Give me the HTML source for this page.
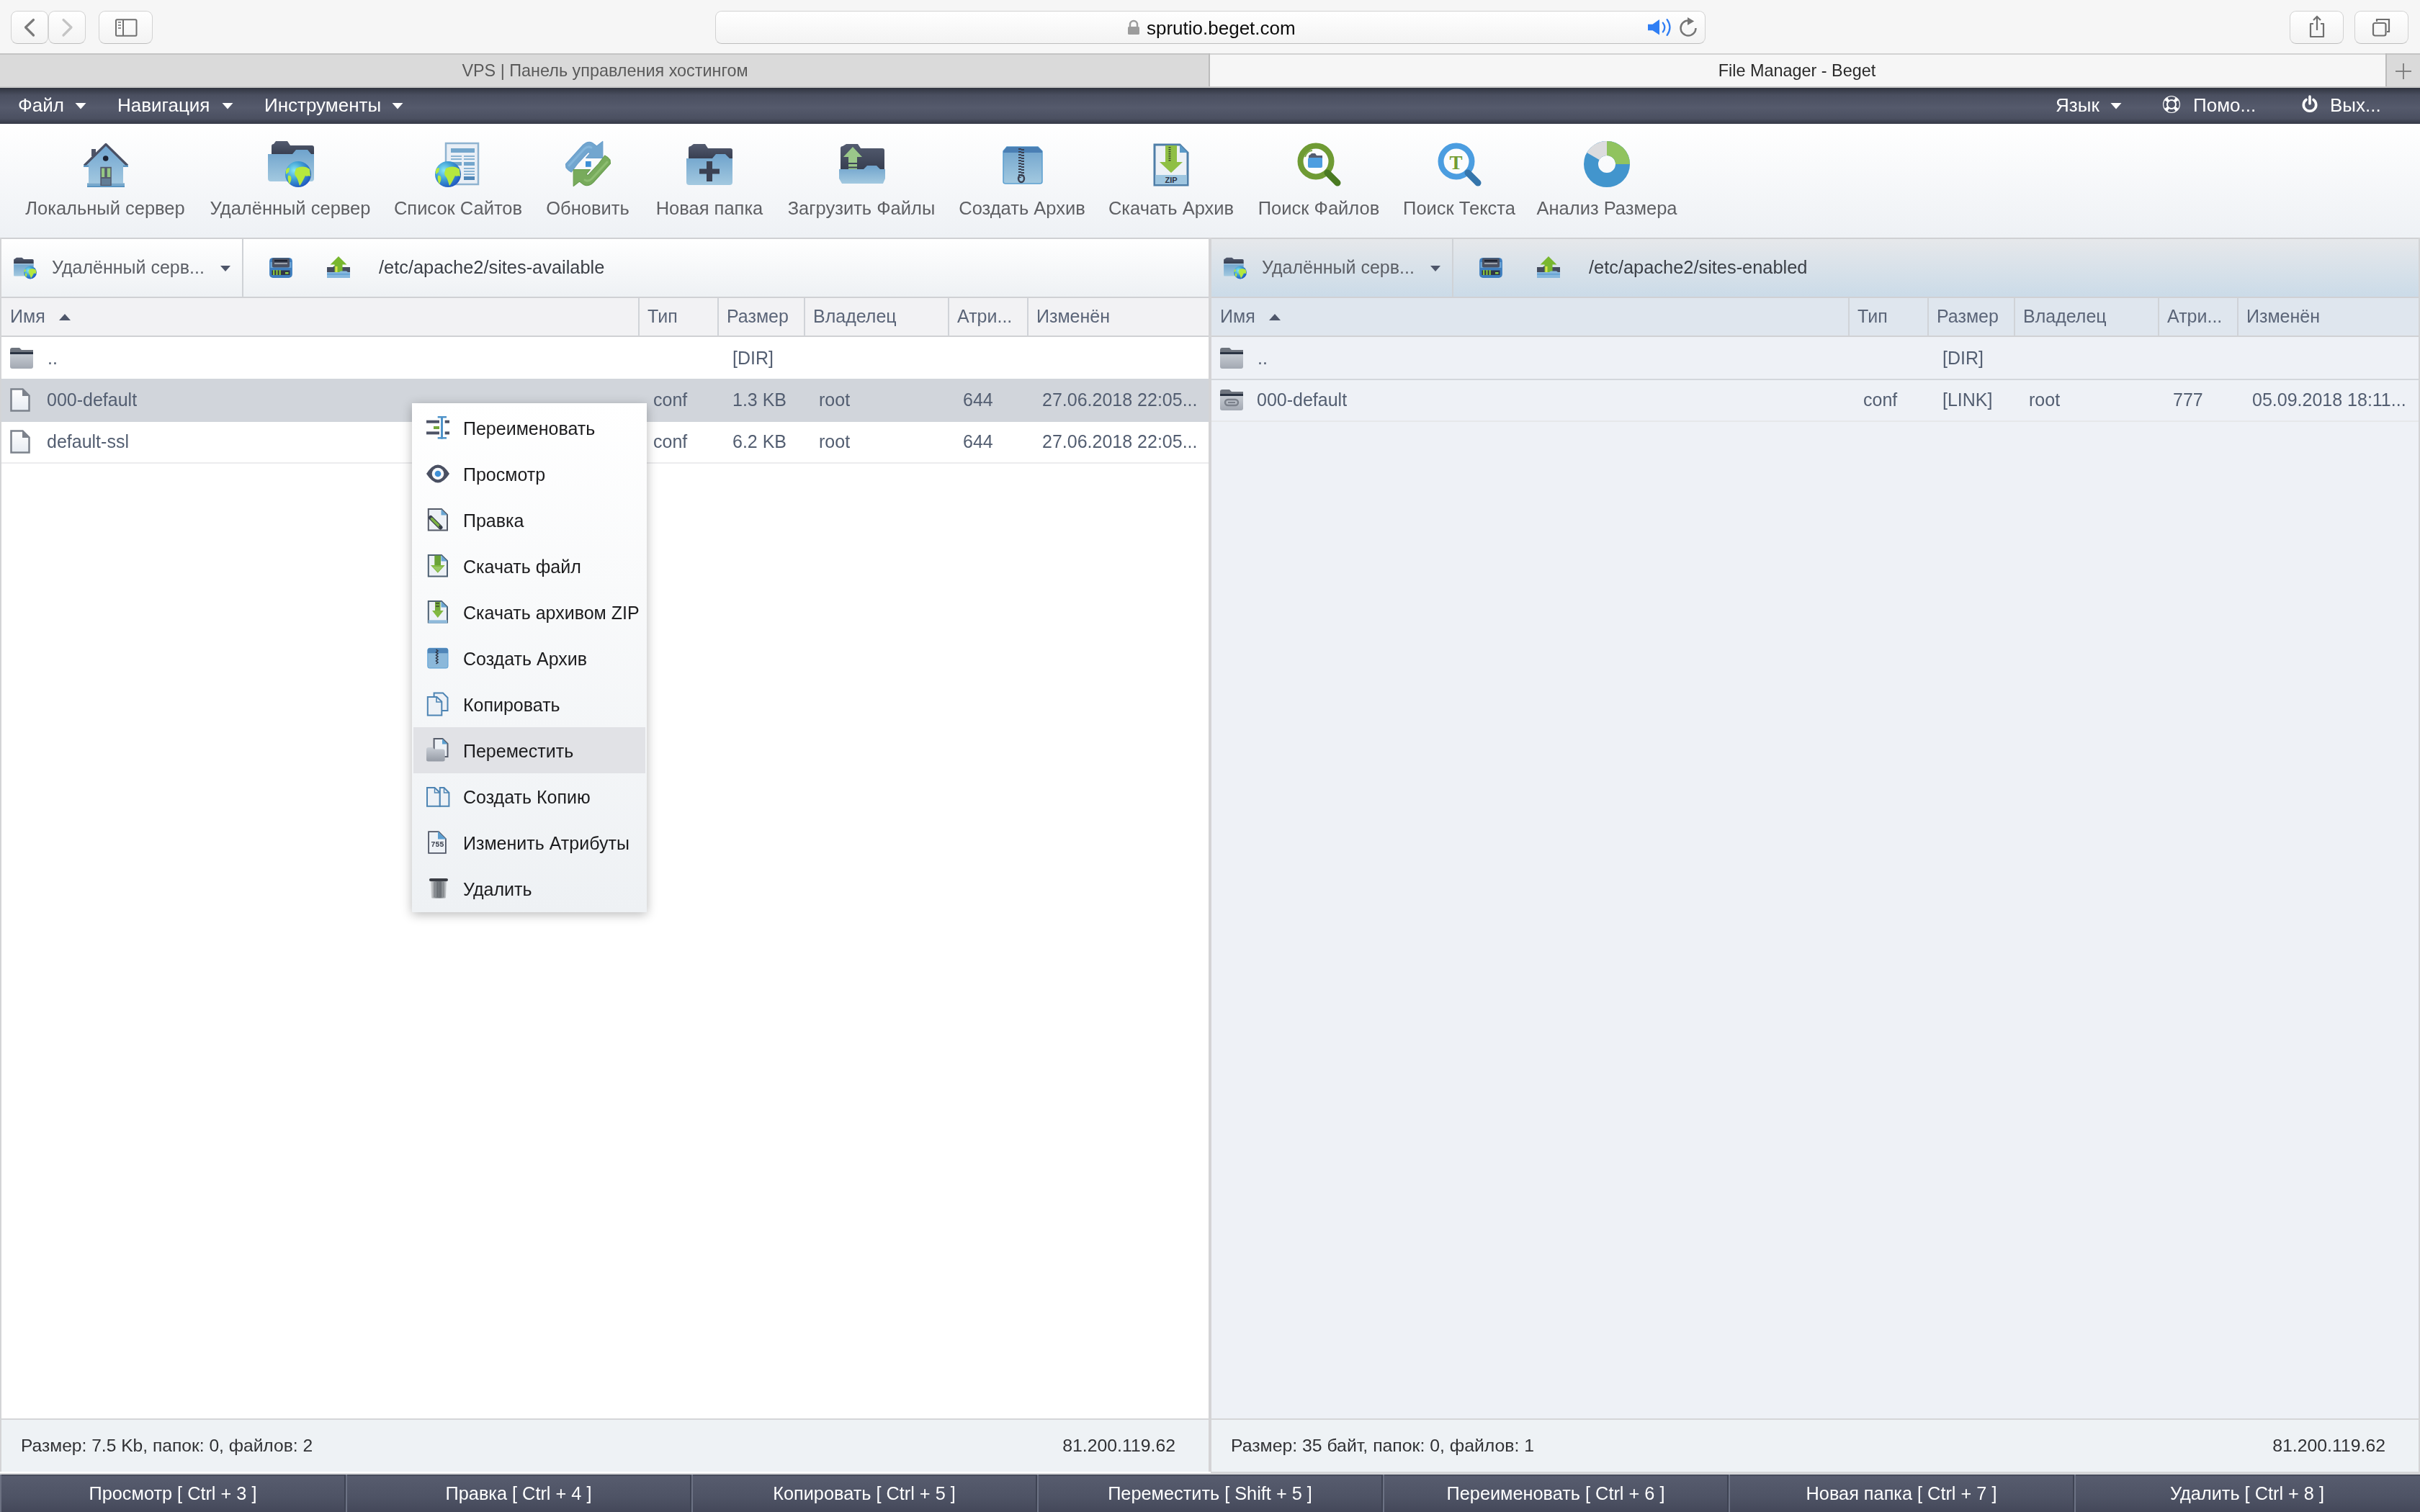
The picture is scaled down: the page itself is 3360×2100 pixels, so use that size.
<!DOCTYPE html>
<html><head><meta charset="utf-8"><title>File Manager - Beget</title>
<style>
html,body{margin:0;padding:0;width:3360px;height:2100px;overflow:hidden;background:#fff}
body{position:relative;font-family:"Liberation Sans",sans-serif}
.r{position:absolute;display:block}
.t{position:absolute;line-height:1;white-space:nowrap;will-change:transform}
svg.r{overflow:visible}
</style></head><body>
<div class="r" style="left:0px;top:0px;width:3360px;height:74px;background:#f6f6f6"></div>
<div class="r" style="left:0px;top:74px;width:3360px;height:2px;background:#c4c4c4"></div>
<div class="r" style="left:15px;top:15px;width:52px;height:46px;border:1px solid #d2d2d2;border-bottom-color:#bdbdbd;border-radius:9px;background:linear-gradient(#ffffff,#f3f3f3);box-sizing:border-box"></div>
<div class="r" style="left:67px;top:15px;width:52px;height:46px;border:1px solid #d2d2d2;border-bottom-color:#bdbdbd;border-radius:9px;background:linear-gradient(#ffffff,#f3f3f3);box-sizing:border-box"></div>
<div class="r" style="left:137px;top:15px;width:75px;height:46px;border:1px solid #d2d2d2;border-bottom-color:#bdbdbd;border-radius:9px;background:linear-gradient(#ffffff,#f3f3f3);box-sizing:border-box"></div>
<div class="r" style="left:993px;top:15px;width:1375px;height:46px;border:1px solid #d2d2d2;border-bottom-color:#bdbdbd;border-radius:9px;background:linear-gradient(#ffffff,#f3f3f3);box-sizing:border-box"></div>
<div class="r" style="left:3179px;top:15px;width:75px;height:46px;border:1px solid #d2d2d2;border-bottom-color:#bdbdbd;border-radius:9px;background:linear-gradient(#ffffff,#f3f3f3);box-sizing:border-box"></div>
<div class="r" style="left:3269px;top:15px;width:75px;height:46px;border:1px solid #d2d2d2;border-bottom-color:#bdbdbd;border-radius:9px;background:linear-gradient(#ffffff,#f3f3f3);box-sizing:border-box"></div>
<svg class="r" style="left:30px;top:24px" width="24" height="28"><path d="M16.5 3.5 L5.5 14 L16.5 25" fill="none" stroke="#7a7a7a" stroke-width="3.2" stroke-linecap="round" stroke-linejoin="round"/></svg>
<svg class="r" style="left:80px;top:24px" width="24" height="28"><path d="M8 3.5 L19 14 L8 25" fill="none" stroke="#c4c4c4" stroke-width="3.2" stroke-linecap="round" stroke-linejoin="round"/></svg>
<svg class="r" style="left:158px;top:24px" width="34" height="28"><rect x="3" y="3.3" width="28.5" height="22.5" rx="1.5" fill="none" stroke="#707070" stroke-width="2"/><line x1="13" y1="3" x2="13" y2="26" stroke="#707070" stroke-width="2"/><g stroke="#7a7a7a" stroke-width="1.7"><line x1="6" y1="7" x2="10" y2="7"/><line x1="6" y1="11" x2="10" y2="11"/><line x1="6" y1="15" x2="10" y2="15"/></g></svg>
<svg class="r" style="left:1565px;top:27px" width="18" height="22"><path d="M4 10 V7 a5 5 0 0 1 10 0 V10" fill="none" stroke="#9c9c9c" stroke-width="2.4"/><rect x="1" y="10" width="16" height="11" rx="1.5" fill="#9c9c9c"/></svg>
<div class="t" style="left:1592px;top:25.8px;font-size:26px;color:#0c0c0c;">sprutio.beget.com</div>
<svg class="r" style="left:2285px;top:24px" width="40" height="28"><path d="M3 9.7 H9.5 L19 3 V24.6 L9.5 18.3 H3 Z" fill="#2f7ef4"/><path d="M23.8 7.6 Q28.8 14 23.8 20.4" fill="none" stroke="#2f7ef4" stroke-width="2.3" stroke-linecap="round"/><path d="M29.6 3.2 Q37.3 14 29.6 24.8" fill="none" stroke="#2f7ef4" stroke-width="2.3" stroke-linecap="round"/></svg>
<svg class="r" style="left:2330px;top:22px" width="30" height="32"><path d="M24.5 17 A10.5 10.5 0 1 1 14 6.5" fill="none" stroke="#767676" stroke-width="2.5"/><path d="M13 2 L13 13 L22.2 7.4 Z" fill="#767676"/></svg>
<svg class="r" style="left:3202px;top:20px" width="30" height="36"><path d="M10 13 H6 V31 H24 V13 H20" fill="none" stroke="#6f6f6f" stroke-width="2.2" stroke-linejoin="round"/><line x1="15" y1="3" x2="15" y2="22" stroke="#6f6f6f" stroke-width="2.2"/><path d="M10 8 L15 3 L20 8" fill="none" stroke="#6f6f6f" stroke-width="2.2"/></svg>
<svg class="r" style="left:3293px;top:24px" width="32" height="28"><rect x="2" y="8" width="17.5" height="17.5" rx="2.5" fill="none" stroke="#6f6f6f" stroke-width="2.2"/><path d="M7 6 V3 H24 V20 H21" fill="none" stroke="#6f6f6f" stroke-width="2.2"/></svg>
<div class="r" style="left:0px;top:76px;width:1678px;height:44px;background:#dadada"></div>
<div class="r" style="left:1678px;top:74px;width:2px;height:48px;background:#bcbcbc"></div>
<div class="r" style="left:1680px;top:76px;width:1632px;height:44px;background:#f6f6f6"></div>
<div class="r" style="left:1680px;top:74px;width:1632px;height:2px;background:#d3d3d3"></div>
<div class="r" style="left:3312px;top:74px;width:2px;height:48px;background:#bcbcbc"></div>
<div class="r" style="left:3314px;top:76px;width:46px;height:44px;background:#dadada"></div>
<div class="r" style="left:0px;top:120px;width:3360px;height:2px;background:#c9c9c9"></div>
<div class="t" style="left:-160px;width:2000px;text-align:center;top:86.7px;font-size:23.4px;color:#5a5a5a;">VPS | Панель управления хостингом</div>
<div class="t" style="left:1495px;width:2000px;text-align:center;top:86.7px;font-size:23.4px;color:#2a2a2a;">File Manager - Beget</div>
<svg class="r" style="left:3325px;top:87px" width="24" height="24"><line x1="12" y1="1" x2="12" y2="23" stroke="#7a7a7a" stroke-width="1.8"/><line x1="1" y1="12" x2="23" y2="12" stroke="#7a7a7a" stroke-width="1.8"/></svg>
<div class="r" style="left:0px;top:122px;width:3360px;height:50px;background:linear-gradient(#30343f 0%,#4a4f60 20%,#555a6c 55%,#4b5061 85%,#353946 100%)"></div>
<div class="t" style="left:24.5px;top:133.0px;font-size:26px;color:#fff;">Файл</div>
<svg class="r" style="left:104px;top:143px" width="16" height="9"><path d="M0.5 0 H15.5 L8 8.5 Z" fill="#fff"/></svg>
<div class="t" style="left:162.5px;top:133.0px;font-size:26px;color:#fff;">Навигация</div>
<svg class="r" style="left:308px;top:143px" width="16" height="9"><path d="M0.5 0 H15.5 L8 8.5 Z" fill="#fff"/></svg>
<div class="t" style="left:366.5px;top:133.0px;font-size:26px;color:#fff;">Инструменты</div>
<svg class="r" style="left:544px;top:143px" width="16" height="9"><path d="M0.5 0 H15.5 L8 8.5 Z" fill="#fff"/></svg>
<div class="t" style="left:2853.5px;top:133.0px;font-size:26px;color:#fff;">Язык</div>
<svg class="r" style="left:2930px;top:143px" width="16" height="9"><path d="M0.5 0 H15.5 L8 8.5 Z" fill="#fff"/></svg>
<svg class="r" style="left:3003px;top:133px" width="24" height="24" viewBox="-12 -12 24 24"><circle r="12" fill="#fff"/><circle r="5" fill="#505567"/><g fill="#4d5264"><path d="M-5.5 -9.2 A10.5 10.5 0 0 1 5.5 -9.2 L3.5 -6 A7 7 0 0 0 -3.5 -6 Z"/><path d="M-5.5 9.2 A10.5 10.5 0 0 0 5.5 9.2 L3.5 6 A7 7 0 0 1 -3.5 6 Z"/><path d="M-9.2 -5.5 A10.5 10.5 0 0 0 -9.2 5.5 L-6 3.5 A7 7 0 0 1 -6 -3.5 Z"/><path d="M9.2 -5.5 A10.5 10.5 0 0 1 9.2 5.5 L6 3.5 A7 7 0 0 0 6 -3.5 Z"/></g></svg>
<div class="t" style="left:3044.5px;top:133.0px;font-size:26px;color:#fff;">Помо...</div>
<svg class="r" style="left:3194px;top:132px" width="26" height="26" viewBox="-13 -13 26 26"><path d="M-5 -6.5 A8.7 8.7 0 1 0 5 -6.5" fill="none" stroke="#fff" stroke-width="3.6" stroke-linecap="round"/><line x1="0" y1="-11" x2="0" y2="-1" stroke="#fff" stroke-width="3.6" stroke-linecap="round"/></svg>
<div class="t" style="left:3234.5px;top:133.0px;font-size:26px;color:#fff;">Вых...</div>
<div class="r" style="left:0px;top:172px;width:3360px;height:158px;background:linear-gradient(#ffffff,#eef1f5)"></div>
<svg width="0" height="0" style="position:absolute"><defs><radialGradient id="gl" cx="0.35" cy="0.35" r="0.7"><stop offset="0" stop-color="#86e8f4"/><stop offset="0.5" stop-color="#3f9ed4"/><stop offset="1" stop-color="#1f58c0"/></radialGradient><linearGradient id="fb" x1="0" y1="0" x2="0" y2="1"><stop offset="0" stop-color="#6fa3cc"/><stop offset="1" stop-color="#a3c9e0"/></linearGradient><linearGradient id="fd" x1="0" y1="0" x2="0" y2="1"><stop offset="0" stop-color="#545c70"/><stop offset="1" stop-color="#353c4e"/></linearGradient><linearGradient id="gfold" x1="0" y1="0" x2="0" y2="1"><stop offset="0" stop-color="#c6cbd2"/><stop offset="1" stop-color="#a2a8b2"/></linearGradient></defs></svg>
<svg class="r" style="left:113px;top:196px" width="64" height="66" viewBox="0 0 64 66"><defs><linearGradient id="hw" x1="0" y1="0" x2="0" y2="1"><stop offset="0" stop-color="#6ea3cf"/><stop offset="1" stop-color="#a2c8e0"/></linearGradient></defs><rect x="14" y="11" width="6" height="10" fill="#4f5568"/><path d="M34 4 L63 33.5 L58 35.8 V58.5 H10 V35.8 L4 33.5 Z" fill="url(#hw)"/><path d="M4 34 L34 4.5 L64 34" fill="none" stroke="#4a5064" stroke-width="3.2" stroke-linejoin="round"/><path d="M3 33.5 H10 V36 H3 Z M58 33.5 H65 V36 H58 Z" fill="#5d97c4"/><rect x="8" y="58.4" width="52" height="5.4" fill="#78a9cc"/><rect x="8" y="62.5" width="52" height="1.5" fill="#4f8dbd"/><circle cx="33.7" cy="24" r="3.8" fill="#1b2233"/><rect x="26.3" y="35.8" width="15.5" height="26.2" fill="#545b6e"/><rect x="28" y="37.6" width="4.2" height="12.4" fill="#95c683"/><rect x="35.8" y="37.6" width="4.5" height="12.4" fill="#95c683"/><rect x="28" y="52" width="12.3" height="8.8" fill="#627d96"/></svg>
<svg class="r" style="left:372px;top:196px" width="64" height="66" viewBox="0 0 64 66"><path d="M5 16 V7 Q5 4 8 4 L11 0 H27 L31 6 H61 Q64 6 64 9 V20 H5 Z" fill="url(#fd)"/><path d="M0 18 H34 L39 12 H55 L60 18 H64 V52 Q64 56 60 56 H4 Q0 56 0 52 Z" fill="url(#fb)"/><circle cx="42" cy="46" r="18" fill="url(#gl)"/><g transform="translate(42,46) scale(1.0)" fill="#b5e83e"><path d="M-3 -8 C2 -11 10 -12 16 -7 L17 3 C14 1 12 4 10 2 L8 6 C6 10 4 14 2 16 C0 10 -1 5 -4 2 C-6 -1 -4 -5 -3 -8 Z"/><path d="M-17 -6 C-15 -9 -13 -10 -12 -8 L-13 -3 L-17 0 Z"/><path d="M-14 2 C-10 1 -9 5 -10 9 L-12 14 C-14 10 -15 6 -14 2 Z"/></g></svg>
<svg class="r" style="left:586px;top:196px" width="80" height="66" viewBox="0 0 80 66"><rect x="33" y="3" width="45" height="57" fill="#e9eff6" stroke="#8fb3d0" stroke-width="2.5"/><rect x="40" y="10" width="33" height="6" fill="#74a6cc"/><rect x="40" y="20" width="15" height="2" fill="#8ab3d3"/><rect x="58" y="20" width="15" height="2" fill="#8ab3d3"/><rect x="40" y="24" width="15" height="2" fill="#8ab3d3"/><rect x="58" y="24" width="15" height="2" fill="#8ab3d3"/><rect x="40" y="29" width="15" height="5" fill="#74a6cc"/><rect x="58" y="29" width="15" height="5" fill="#74a6cc"/><rect x="58" y="37" width="15" height="2" fill="#8ab3d3"/><rect x="58" y="41" width="15" height="2" fill="#8ab3d3"/><rect x="58" y="45" width="15" height="2" fill="#8ab3d3"/><rect x="58" y="49" width="15" height="5" fill="#4f86b8"/><circle cx="36" cy="46" r="18" fill="url(#gl)"/><g transform="translate(36,46) scale(1.0)" fill="#b5e83e"><path d="M-3 -8 C2 -11 10 -12 16 -7 L17 3 C14 1 12 4 10 2 L8 6 C6 10 4 14 2 16 C0 10 -1 5 -4 2 C-6 -1 -4 -5 -3 -8 Z"/><path d="M-17 -6 C-15 -9 -13 -10 -12 -8 L-13 -3 L-17 0 Z"/><path d="M-14 2 C-10 1 -9 5 -10 9 L-12 14 C-14 10 -15 6 -14 2 Z"/></g></svg>
<svg class="r" style="left:784px;top:196px" width="66" height="66" viewBox="0 0 66 66"><g><path d="M1.5 32 L25.4 5.5 Q32.5 -1 38.5 2.5 L44.5 7 L52.8 0.5 V23.3 H29.6 L34.9 17.3 Q34 14.5 31.5 16.5 L17.7 31.6 L9.3 43 Q5 41 2 37 Z" fill="#72a6cf" stroke="#6a9fcc" stroke-width="1.2" stroke-linejoin="round"/><path d="M6 34 L27 11 Q32 6 37 9" fill="none" stroke="#8bbcdf" stroke-width="3" stroke-linecap="round" opacity="0.7"/></g><g transform="rotate(180 32.5 31.5)"><path d="M1.5 32 L25.4 5.5 Q32.5 -1 38.5 2.5 L44.5 7 L52.8 0.5 V23.3 H29.6 L34.9 17.3 Q34 14.5 31.5 16.5 L17.7 31.6 L9.3 43 Q5 41 2 37 Z" fill="#78ab5c" stroke="#6b9f52" stroke-width="1.2" stroke-linejoin="round"/><path d="M6 34 L27 11 Q32 6 37 9" fill="none" stroke="#96c57a" stroke-width="3" stroke-linecap="round" opacity="0.7"/></g><rect x="29" y="28" width="7.7" height="7.8" fill="#3d8fd6"/></svg>
<svg class="r" style="left:953px;top:200px" width="64" height="60" viewBox="0 0 64 60"><path d="M3 18 V6 Q3 3 6 3 L10 0 H26 L30 6 H61 Q64 6 64 9 V22 H3 Z" fill="url(#fd)"/><path d="M0 20 H36 L41 14 H54 L60 20 H64 V53 Q64 57 60 57 H4 Q0 57 0 53 Z" fill="url(#fb)"/><rect x="28" y="24" width="8" height="28" fill="#3b4152"/><rect x="18" y="34.5" width="28" height="7" fill="#3b4152"/></svg>
<svg class="r" style="left:1165px;top:198px" width="64" height="60" viewBox="0 0 64 60"><path d="M2 40 V8 Q2 5 5 5 L10 2 H26 L30 8 H60 Q63 8 63 11 V40 Z" fill="url(#fd)"/><path d="M6 20 L19 6 L32 20 H25 V28 H13 V20 Z" fill="#9ac78a"/><rect x="13" y="30" width="12" height="3.5" fill="#9ac78a"/><rect x="13" y="35.5" width="12" height="2.5" fill="#9ac78a"/><path d="M0 37 H34 L39 32 H52 L57 37 H64 V50 L61 57 H4 L0 50 Z" fill="url(#fb)"/></svg>
<svg class="r" style="left:1391px;top:203px" width="57" height="54" viewBox="0 0 57 54"><path d="M2 7 L7 1 H50 L56 7 V49 Q56 52 53 52 H5 Q2 52 2 49 Z" fill="url(#fb)" stroke="#5b9fd0" stroke-width="1.5"/><path d="M2 7 L7 1 H50 L56 7 V9 H2 Z" fill="#4a7fb4"/><path d="M25 3 V44" stroke="#3b4152" stroke-width="4" stroke-dasharray="2 2"/><path d="M29 2 V43" stroke="#3b4152" stroke-width="4" stroke-dasharray="2 2" stroke-dashoffset="2"/><ellipse cx="27" cy="45" rx="4" ry="5" fill="none" stroke="#3b4152" stroke-width="2.5"/></svg>
<svg class="r" style="left:1601px;top:199px" width="50" height="60" viewBox="0 0 50 60"><path d="M2 2 H37 L48 13 V58 H2 Z" fill="#edf1f6" stroke="#4f7ea8" stroke-width="3"/><path d="M37 2 V13 H48 Z" fill="#5c9ac8"/><rect x="3" y="44" width="44" height="13" fill="#9fc6e0"/><text x="25" y="55" font-family="Liberation Sans" font-weight="bold" font-size="11" text-anchor="middle" fill="#2e3445">ZIP</text><path d="M17 3 H33 V26 H41 L25 41 L9 26 H17 Z" fill="#8fbf45"/><path d="M23 5 V26" stroke="#3b4a2d" stroke-width="3" stroke-dasharray="1.5 1.5"/></svg>
<svg class="r" style="left:1799px;top:196px" width="64" height="64" viewBox="0 0 64 64"><circle cx="28" cy="28" r="21.5" fill="#fbfcfd" stroke="#6f9b34" stroke-width="8"/><path d="M44 44 L58 58" stroke="#4a7a22" stroke-width="9" stroke-linecap="round"/><path d="M18 24 V21 Q18 19 20 19 L22 17 H27 L29 20 H37 V24 Z" fill="#545c70"/><rect x="17" y="23" width="20" height="14" rx="2" fill="#4d9ee0"/><path d="M13 22 Q15 14 23 13" fill="none" stroke="#7aa644" stroke-width="2"/></svg>
<svg class="r" style="left:1994px;top:196px" width="64" height="64" viewBox="0 0 64 64"><circle cx="28" cy="28" r="21.5" fill="#fbfcfd" stroke="#4b9de0" stroke-width="8"/><path d="M44 44 L58 58" stroke="#3575ab" stroke-width="9" stroke-linecap="round"/><text x="27.5" y="39" font-family="Liberation Serif" font-weight="bold" font-size="27" text-anchor="middle" fill="#719c33">T</text></svg>
<svg class="r" style="left:2199px;top:196px" width="64" height="64" viewBox="0 0 64 64"><circle cx="32" cy="32" r="22" fill="none" stroke="#4295cd" stroke-width="20"/><path d="M32 0 A32 32 0 0 1 64 32 H44 A12 12 0 0 0 32 20 Z" fill="#90c35f"/><path d="M32 0 A32 32 0 0 0 4.3 16 L21.6 26 A12 12 0 0 1 32 20 Z" fill="#dcdcde"/></svg>
<div class="t" style="left:-854px;width:2000px;text-align:center;top:276.9px;font-size:25.5px;color:#5f6064;">Локальный сервер</div>
<div class="t" style="left:-597px;width:2000px;text-align:center;top:276.9px;font-size:25.5px;color:#5f6064;">Удалённый сервер</div>
<div class="t" style="left:-364px;width:2000px;text-align:center;top:276.9px;font-size:25.5px;color:#5f6064;">Список Сайтов</div>
<div class="t" style="left:-184px;width:2000px;text-align:center;top:276.9px;font-size:25.5px;color:#5f6064;">Обновить</div>
<div class="t" style="left:-15px;width:2000px;text-align:center;top:276.9px;font-size:25.5px;color:#5f6064;">Новая папка</div>
<div class="t" style="left:195.5px;width:2000px;text-align:center;top:276.9px;font-size:25.5px;color:#5f6064;">Загрузить Файлы</div>
<div class="t" style="left:419px;width:2000px;text-align:center;top:276.9px;font-size:25.5px;color:#5f6064;">Создать Архив</div>
<div class="t" style="left:625.5px;width:2000px;text-align:center;top:276.9px;font-size:25.5px;color:#5f6064;">Скачать Архив</div>
<div class="t" style="left:831px;width:2000px;text-align:center;top:276.9px;font-size:25.5px;color:#5f6064;">Поиск Файлов</div>
<div class="t" style="left:1025.5px;width:2000px;text-align:center;top:276.9px;font-size:25.5px;color:#5f6064;">Поиск Текста</div>
<div class="t" style="left:1231px;width:2000px;text-align:center;top:276.9px;font-size:25.5px;color:#5f6064;">Анализ Размера</div>
<div class="r" style="left:0px;top:330px;width:1680px;height:2px;background:#cfd0d3"></div>
<div class="r" style="left:2px;top:332px;width:1676px;height:80px;background:linear-gradient(#ffffff,#eef1f4)"></div>
<div class="r" style="left:2px;top:412px;width:1676px;height:2px;background:#d0d1d4"></div>
<div class="r" style="left:2px;top:414px;width:1676px;height:52px;background:#f2f2f4"></div>
<div class="r" style="left:2px;top:466px;width:1676px;height:2px;background:#d0d1d4"></div>
<div class="r" style="left:2px;top:468px;width:1676px;height:1502px;background:#ffffff"></div>
<div class="r" style="left:2px;top:1970px;width:1676px;height:2px;background:#d5d6d8"></div>
<div class="r" style="left:2px;top:1972px;width:1676px;height:72px;background:#eef2f5"></div>
<svg class="r" style="left:18px;top:356px" width="36" height="34" viewBox="0 0 36 34"><path d="M1.1 10 V5 Q1.1 3.5 2.6 3.5 L5 1.7 H12.5 L15 4 H27 Q28.7 4 28.7 5.5 V10 Z" fill="url(#fd)"/><rect x="1.1" y="10" width="27.6" height="17.5" rx="1" fill="url(#fb)"/><rect x="1.1" y="10" width="27.6" height="1.6" fill="#9cc0dc"/><circle cx="24" cy="22.5" r="8.9" fill="url(#gl)"/><g transform="translate(24,22.5) scale(0.49444444444444446)" fill="#b5e83e"><path d="M-3 -8 C2 -11 10 -12 16 -7 L17 3 C14 1 12 4 10 2 L8 6 C6 10 4 14 2 16 C0 10 -1 5 -4 2 C-6 -1 -4 -5 -3 -8 Z"/><path d="M-17 -6 C-15 -9 -13 -10 -12 -8 L-13 -3 L-17 0 Z"/><path d="M-14 2 C-10 1 -9 5 -10 9 L-12 14 C-14 10 -15 6 -14 2 Z"/></g></svg>
<div class="t" style="left:72px;top:359.3px;font-size:25px;color:#5c5f66;">Удалённый серв...</div>
<svg class="r" style="left:305.5px;top:369px" width="14" height="9" viewBox="0 0 14 9"><path d="M0 0 H14 L7 8 Z" fill="#4e566a"/></svg>
<div class="r" style="left:336px;top:332px;width:2px;height:80px;background:#cfd2d6"></div>
<svg class="r" style="left:373px;top:356px" width="34" height="32" viewBox="0 0 34 32"><rect x="1.1" y="1.9" width="31.8" height="28" rx="5" fill="#3f7fbf"/><rect x="2.5" y="8" width="29" height="8" fill="#6fa6d6"/><rect x="4.9" y="2.4" width="24.2" height="13" rx="2" fill="#4b5263"/><rect x="8" y="5" width="18" height="2.5" fill="#1d2230"/><rect x="8" y="9" width="18" height="2" fill="#9aa0aa"/><rect x="4.5" y="19.5" width="25" height="6.5" fill="#2f3646"/><g fill="#86c13a"><rect x="6" y="19" width="2.3" height="7"/><rect x="10.3" y="19" width="2.3" height="7"/><rect x="14.5" y="19" width="2.3" height="7"/></g><rect x="23" y="22" width="4.5" height="2.5" fill="#8fd04a"/></svg>
<svg class="r" style="left:453px;top:356px" width="34" height="32" viewBox="0 0 34 32"><path d="M1 15 H9 L11 13.5 H18 L20 15 H33 V22.5 H1 Z" fill="#454c5e"/><path d="M17 0 L28.5 11.5 H22.5 V23 H11.5 V11.5 H5.5 Z" fill="#79b72f"/><rect x="12.5" y="14" width="3" height="9" fill="#d8e84a"/><path d="M1 22 H18 L20 20.5 H28 L30 22 H33 V30 H1 Z" fill="#86b7dd"/><rect x="1" y="24" width="32" height="1.5" fill="#5e9fd2"/></svg>
<div class="t" style="left:526px;top:359.0px;font-size:25.4px;color:#3b3f46;">/etc/apache2/sites-available</div>
<div class="t" style="left:13.5px;top:427.3px;font-size:25px;color:#5b6578;">Имя</div>
<svg class="r" style="left:82px;top:436px" width="16" height="10" viewBox="0 0 16 10"><path d="M0 9 L8 0 L16 9 Z" fill="#4e566a"/></svg>
<div class="r" style="left:886px;top:414px;width:2px;height:52px;background:#d0d3d8"></div>
<div class="r" style="left:996px;top:414px;width:2px;height:52px;background:#d0d3d8"></div>
<div class="r" style="left:1116px;top:414px;width:2px;height:52px;background:#d0d3d8"></div>
<div class="r" style="left:1316px;top:414px;width:2px;height:52px;background:#d0d3d8"></div>
<div class="r" style="left:1426px;top:414px;width:2px;height:52px;background:#d0d3d8"></div>
<div class="t" style="left:898.5px;top:427.3px;font-size:25px;color:#5b6578;">Тип</div>
<div class="t" style="left:1008.5px;top:427.3px;font-size:25px;color:#5b6578;">Размер</div>
<div class="t" style="left:1128.5px;top:427.3px;font-size:25px;color:#5b6578;">Владелец</div>
<div class="t" style="left:1328.5px;top:427.3px;font-size:25px;color:#5b6578;">Атри...</div>
<div class="t" style="left:1438.5px;top:427.3px;font-size:25px;color:#5b6578;">Изменён</div>
<div class="r" style="left:1680px;top:330px;width:1680px;height:2px;background:#cfd0d3"></div>
<div class="r" style="left:1682px;top:332px;width:1676px;height:80px;background:linear-gradient(#e6e8eb,#cbdbe8)"></div>
<div class="r" style="left:1682px;top:412px;width:1676px;height:2px;background:#d0d1d4"></div>
<div class="r" style="left:1682px;top:414px;width:1676px;height:52px;background:#dfe6ee"></div>
<div class="r" style="left:1682px;top:466px;width:1676px;height:2px;background:#d0d1d4"></div>
<div class="r" style="left:1682px;top:468px;width:1676px;height:1502px;background:#eef1f6"></div>
<div class="r" style="left:1682px;top:1970px;width:1676px;height:2px;background:#d5d6d8"></div>
<div class="r" style="left:1682px;top:1972px;width:1676px;height:72px;background:#eef2f5"></div>
<svg class="r" style="left:1698px;top:356px" width="36" height="34" viewBox="0 0 36 34"><path d="M1.1 10 V5 Q1.1 3.5 2.6 3.5 L5 1.7 H12.5 L15 4 H27 Q28.7 4 28.7 5.5 V10 Z" fill="url(#fd)"/><rect x="1.1" y="10" width="27.6" height="17.5" rx="1" fill="url(#fb)"/><rect x="1.1" y="10" width="27.6" height="1.6" fill="#9cc0dc"/><circle cx="24" cy="22.5" r="8.9" fill="url(#gl)"/><g transform="translate(24,22.5) scale(0.49444444444444446)" fill="#b5e83e"><path d="M-3 -8 C2 -11 10 -12 16 -7 L17 3 C14 1 12 4 10 2 L8 6 C6 10 4 14 2 16 C0 10 -1 5 -4 2 C-6 -1 -4 -5 -3 -8 Z"/><path d="M-17 -6 C-15 -9 -13 -10 -12 -8 L-13 -3 L-17 0 Z"/><path d="M-14 2 C-10 1 -9 5 -10 9 L-12 14 C-14 10 -15 6 -14 2 Z"/></g></svg>
<div class="t" style="left:1752px;top:359.3px;font-size:25px;color:#5c5f66;">Удалённый серв...</div>
<svg class="r" style="left:1985.5px;top:369px" width="14" height="9" viewBox="0 0 14 9"><path d="M0 0 H14 L7 8 Z" fill="#4e566a"/></svg>
<div class="r" style="left:2016px;top:332px;width:2px;height:80px;background:#cfd2d6"></div>
<svg class="r" style="left:2053px;top:356px" width="34" height="32" viewBox="0 0 34 32"><rect x="1.1" y="1.9" width="31.8" height="28" rx="5" fill="#3f7fbf"/><rect x="2.5" y="8" width="29" height="8" fill="#6fa6d6"/><rect x="4.9" y="2.4" width="24.2" height="13" rx="2" fill="#4b5263"/><rect x="8" y="5" width="18" height="2.5" fill="#1d2230"/><rect x="8" y="9" width="18" height="2" fill="#9aa0aa"/><rect x="4.5" y="19.5" width="25" height="6.5" fill="#2f3646"/><g fill="#86c13a"><rect x="6" y="19" width="2.3" height="7"/><rect x="10.3" y="19" width="2.3" height="7"/><rect x="14.5" y="19" width="2.3" height="7"/></g><rect x="23" y="22" width="4.5" height="2.5" fill="#8fd04a"/></svg>
<svg class="r" style="left:2133px;top:356px" width="34" height="32" viewBox="0 0 34 32"><path d="M1 15 H9 L11 13.5 H18 L20 15 H33 V22.5 H1 Z" fill="#454c5e"/><path d="M17 0 L28.5 11.5 H22.5 V23 H11.5 V11.5 H5.5 Z" fill="#79b72f"/><rect x="12.5" y="14" width="3" height="9" fill="#d8e84a"/><path d="M1 22 H18 L20 20.5 H28 L30 22 H33 V30 H1 Z" fill="#86b7dd"/><rect x="1" y="24" width="32" height="1.5" fill="#5e9fd2"/></svg>
<div class="t" style="left:2206px;top:359.0px;font-size:25.4px;color:#3b3f46;">/etc/apache2/sites-enabled</div>
<div class="t" style="left:1693.5px;top:427.3px;font-size:25px;color:#5b6578;">Имя</div>
<svg class="r" style="left:1762px;top:436px" width="16" height="10" viewBox="0 0 16 10"><path d="M0 9 L8 0 L16 9 Z" fill="#4e566a"/></svg>
<div class="r" style="left:2566px;top:414px;width:2px;height:52px;background:#d0d3d8"></div>
<div class="r" style="left:2676px;top:414px;width:2px;height:52px;background:#d0d3d8"></div>
<div class="r" style="left:2796px;top:414px;width:2px;height:52px;background:#d0d3d8"></div>
<div class="r" style="left:2996px;top:414px;width:2px;height:52px;background:#d0d3d8"></div>
<div class="r" style="left:3106px;top:414px;width:2px;height:52px;background:#d0d3d8"></div>
<div class="t" style="left:2578.5px;top:427.3px;font-size:25px;color:#5b6578;">Тип</div>
<div class="t" style="left:2688.5px;top:427.3px;font-size:25px;color:#5b6578;">Размер</div>
<div class="t" style="left:2808.5px;top:427.3px;font-size:25px;color:#5b6578;">Владелец</div>
<div class="t" style="left:3008.5px;top:427.3px;font-size:25px;color:#5b6578;">Атри...</div>
<div class="t" style="left:3118.5px;top:427.3px;font-size:25px;color:#5b6578;">Изменён</div>
<div class="r" style="left:0px;top:330px;width:2px;height:1718px;background:#d3d4d6"></div>
<div class="r" style="left:1678px;top:330px;width:4px;height:1714px;background:#d4d4d6"></div>
<div class="r" style="left:3358px;top:330px;width:2px;height:1718px;background:#d3d4d6"></div>
<div class="r" style="left:0px;top:2044px;width:1681px;height:2px;background:#ffffff"></div>
<div class="r" style="left:0px;top:2046px;width:3360px;height:2px;background:#d6d7d9"></div>
<div class="r" style="left:1681px;top:2044px;width:1679px;height:2px;background:#d5d6d8"></div>
<svg class="r" style="left:14px;top:483px" width="32" height="30" viewBox="0 0 32 30"><path d="M0 6 V3 Q0 0 3 0 H13 L16 3 H32 V7 H0 Z" fill="#6e747e"/><rect x="0" y="6" width="32" height="3" fill="#2b3443"/><path d="M0 9 H32 V26 Q32 29 29 29 H3 Q0 29 0 26 Z" fill="url(#gfold)"/></svg>
<div class="t" style="left:66px;top:485.3px;font-size:25px;color:#535e71;">..</div>
<div class="t" style="left:1017px;top:485.3px;font-size:25px;color:#535e71;">[DIR]</div>
<div class="r" style="left:2px;top:526px;width:1676px;height:60px;background:#d1d5db"></div>
<svg class="r" style="left:14px;top:539px" width="30" height="34" viewBox="0 0 30 34"><defs><linearGradient id="fg" x1="0" y1="0" x2="0" y2="1"><stop offset="0" stop-color="#ffffff"/><stop offset="1" stop-color="#e6ebf2"/></linearGradient></defs><path d="M1.5 1.5 H17.5 L26.5 10.5 V31.5 H1.5 Z" fill="url(#fg)" stroke="#7c828c" stroke-width="2.5"/><path d="M17 1 V11 H27 Z" fill="#7c828c"/></svg>
<div class="t" style="left:65px;top:543.3px;font-size:25px;color:#535e71;">000-default</div>
<div class="t" style="left:907px;top:543.3px;font-size:25px;color:#535e71;">conf</div>
<div class="t" style="left:1017px;top:543.3px;font-size:25px;color:#535e71;">1.3 KB</div>
<div class="t" style="left:1137px;top:543.3px;font-size:25px;color:#535e71;">root</div>
<div class="t" style="left:1337px;top:543.3px;font-size:25px;color:#535e71;">644</div>
<div class="t" style="left:1447px;top:543.3px;font-size:25px;color:#535e71;">27.06.2018 22:05...</div>
<svg class="r" style="left:14px;top:597px" width="30" height="34" viewBox="0 0 30 34"><defs><linearGradient id="fg" x1="0" y1="0" x2="0" y2="1"><stop offset="0" stop-color="#ffffff"/><stop offset="1" stop-color="#e6ebf2"/></linearGradient></defs><path d="M1.5 1.5 H17.5 L26.5 10.5 V31.5 H1.5 Z" fill="url(#fg)" stroke="#7c828c" stroke-width="2.5"/><path d="M17 1 V11 H27 Z" fill="#7c828c"/></svg>
<div class="t" style="left:65px;top:601.3px;font-size:25px;color:#535e71;">default-ssl</div>
<div class="t" style="left:907px;top:601.3px;font-size:25px;color:#535e71;">conf</div>
<div class="t" style="left:1017px;top:601.3px;font-size:25px;color:#535e71;">6.2 KB</div>
<div class="t" style="left:1137px;top:601.3px;font-size:25px;color:#535e71;">root</div>
<div class="t" style="left:1337px;top:601.3px;font-size:25px;color:#535e71;">644</div>
<div class="t" style="left:1447px;top:601.3px;font-size:25px;color:#535e71;">27.06.2018 22:05...</div>
<div class="r" style="left:2px;top:642px;width:1676px;height:2px;background:#ececee"></div>
<svg class="r" style="left:1694px;top:483px" width="32" height="30" viewBox="0 0 32 30"><path d="M0 6 V3 Q0 0 3 0 H13 L16 3 H32 V7 H0 Z" fill="#6e747e"/><rect x="0" y="6" width="32" height="3" fill="#2b3443"/><path d="M0 9 H32 V26 Q32 29 29 29 H3 Q0 29 0 26 Z" fill="url(#gfold)"/></svg>
<div class="t" style="left:1746px;top:485.3px;font-size:25px;color:#535e71;">..</div>
<div class="t" style="left:2697px;top:485.3px;font-size:25px;color:#535e71;">[DIR]</div>
<div class="r" style="left:1682px;top:526px;width:1676px;height:2px;background:#d3d7dc"></div>
<svg class="r" style="left:1694px;top:541px" width="32" height="30" viewBox="0 0 32 30"><path d="M0 6 V3 Q0 0 3 0 H13 L16 3 H32 V7 H0 Z" fill="#6e747e"/><rect x="0" y="6" width="32" height="3" fill="#2b3443"/><path d="M0 9 H32 V26 Q32 29 29 29 H3 Q0 29 0 26 Z" fill="url(#gfold)"/><rect x="7" y="14" width="18" height="8" rx="4" fill="none" stroke="#7b818b" stroke-width="2.5"/><rect x="11" y="16.8" width="10" height="2.4" fill="#b5bac2"/><rect x="11" y="17" width="10" height="2" fill="#7b818b"/></svg>
<div class="t" style="left:1745px;top:543.3px;font-size:25px;color:#535e71;">000-default</div>
<div class="t" style="left:2587px;top:543.3px;font-size:25px;color:#535e71;">conf</div>
<div class="t" style="left:2697px;top:543.3px;font-size:25px;color:#535e71;">[LINK]</div>
<div class="t" style="left:2817px;top:543.3px;font-size:25px;color:#535e71;">root</div>
<div class="t" style="left:3017px;top:543.3px;font-size:25px;color:#535e71;">777</div>
<div class="t" style="left:3127px;top:543.3px;font-size:25px;color:#535e71;">05.09.2018 18:11...</div>
<div class="r" style="left:1682px;top:584px;width:1676px;height:2px;background:#e6e8ea"></div>
<div class="t" style="left:28.5px;top:1995.7px;font-size:24.6px;color:#303134;">Размер: 7.5 Kb, папок: 0, файлов: 2</div>
<div class="t" style="left:-368px;width:2000px;text-align:right;top:1995.5px;font-size:24.8px;color:#303134;">81.200.119.62</div>
<div class="t" style="left:1708.5px;top:1995.5px;font-size:24.8px;color:#303134;">Размер: 35 байт, папок: 0, файлов: 1</div>
<div class="t" style="left:1312px;width:2000px;text-align:right;top:1995.5px;font-size:24.8px;color:#303134;">81.200.119.62</div>
<div class="r" style="left:0px;top:2048px;width:3360px;height:52px;background:linear-gradient(#3f4453 0,#3f4453 1px,#575c6e 2px,#4e5365 60%,#444859)"></div>
<div class="t" style="left:-760px;width:2000px;text-align:center;top:2062.1px;font-size:25.3px;color:#ffffff;">Просмотр [ Ctrl + 3 ]</div>
<div class="t" style="left:-280px;width:2000px;text-align:center;top:2062.1px;font-size:25.3px;color:#ffffff;">Правка [ Ctrl + 4 ]</div>
<div class="r" style="left:478px;top:2048px;width:2px;height:52px;background:#3e4353"></div>
<div class="r" style="left:480px;top:2048px;width:2px;height:52px;background:#6c7284"></div>
<div class="t" style="left:200px;width:2000px;text-align:center;top:2062.1px;font-size:25.3px;color:#ffffff;">Копировать [ Ctrl + 5 ]</div>
<div class="r" style="left:958px;top:2048px;width:2px;height:52px;background:#3e4353"></div>
<div class="r" style="left:960px;top:2048px;width:2px;height:52px;background:#6c7284"></div>
<div class="t" style="left:680px;width:2000px;text-align:center;top:2062.1px;font-size:25.3px;color:#ffffff;">Переместить [ Shift + 5 ]</div>
<div class="r" style="left:1438px;top:2048px;width:2px;height:52px;background:#3e4353"></div>
<div class="r" style="left:1440px;top:2048px;width:2px;height:52px;background:#6c7284"></div>
<div class="t" style="left:1160px;width:2000px;text-align:center;top:2062.1px;font-size:25.3px;color:#ffffff;">Переименовать [ Ctrl + 6 ]</div>
<div class="r" style="left:1918px;top:2048px;width:2px;height:52px;background:#3e4353"></div>
<div class="r" style="left:1920px;top:2048px;width:2px;height:52px;background:#6c7284"></div>
<div class="t" style="left:1640px;width:2000px;text-align:center;top:2062.1px;font-size:25.3px;color:#ffffff;">Новая папка [ Ctrl + 7 ]</div>
<div class="r" style="left:2398px;top:2048px;width:2px;height:52px;background:#3e4353"></div>
<div class="r" style="left:2400px;top:2048px;width:2px;height:52px;background:#6c7284"></div>
<div class="t" style="left:2120px;width:2000px;text-align:center;top:2062.1px;font-size:25.3px;color:#ffffff;">Удалить [ Ctrl + 8 ]</div>
<div class="r" style="left:2878px;top:2048px;width:2px;height:52px;background:#3e4353"></div>
<div class="r" style="left:2880px;top:2048px;width:2px;height:52px;background:#6c7284"></div>
<div class="r" style="left:0px;top:2048px;width:2px;height:52px;background:#6c7182"></div>
<div class="r" style="left:572px;top:560px;width:326px;height:707px;background:linear-gradient(#ffffff,#eef1f4);box-shadow:0 3px 14px rgba(0,0,0,0.28);"></div>
<div class="r" style="left:574px;top:1010px;width:322px;height:64px;background:#e1e2e6"></div>
<svg class="r" style="left:592px;top:577px" width="34" height="34" viewBox="0 0 34 34"><rect x="0" y="6.7" width="18" height="4" fill="#4d5366"/><rect x="25.7" y="6.7" width="6.3" height="4" fill="#4d5366"/><rect x="10" y="15" width="8" height="4" fill="#74a83a"/><rect x="0" y="22.4" width="18" height="4" fill="#4d5366"/><rect x="25.7" y="22.4" width="6.3" height="4" fill="#4d5366"/><rect x="20" y="1" width="3" height="31.6" fill="#4f93c9"/><rect x="15.7" y="1" width="12.3" height="2.5" fill="#4f93c9"/><rect x="15.7" y="30.1" width="12.3" height="2.5" fill="#4f93c9"/></svg>
<div class="t" style="left:643px;top:582.8px;font-size:25px;color:#1c1c1e;">Переименовать</div>
<svg class="r" style="left:592px;top:641px" width="34" height="34" viewBox="0 0 34 34"><path d="M0 17 Q16 -8 32 17 Q16 42 0 17 Z" fill="#4a5062"/><circle cx="16" cy="17" r="8.3" fill="#f6f8fa"/><circle cx="16" cy="17" r="4.3" fill="#3e8fd6"/></svg>
<div class="t" style="left:643px;top:646.8px;font-size:25px;color:#1c1c1e;">Просмотр</div>
<svg class="r" style="left:592px;top:705px" width="34" height="34" viewBox="0 0 34 34"><path d="M2.8 2 H21 L29 10 V31.5 H2.8 Z" fill="#edf1f6" stroke="#555b68" stroke-width="2"/><path d="M20.5 2 V10.5 H29 Z" fill="#6aa6d2"/><path d="M6 14 L19.5 27.5" stroke="#3a4050" stroke-width="6" stroke-linecap="round"/><path d="M7.5 15.5 L18 26" stroke="#7cb342" stroke-width="3.5" stroke-linecap="round"/><path d="M18 24 L22 29 L17 27 Z" fill="#2c3240"/></svg>
<div class="t" style="left:643px;top:710.8px;font-size:25px;color:#1c1c1e;">Правка</div>
<svg class="r" style="left:592px;top:769px" width="34" height="34" viewBox="0 0 34 34"><path d="M2.8 2 H21 L29 10 V31.5 H2.8 Z" fill="#edf1f6" stroke="#4d6072" stroke-width="2"/><path d="M20.5 2 V10.5 H29 Z" fill="#6aa6d2"/><rect x="11.3" y="2.5" width="8.7" height="14" fill="#69a236"/><path d="M6 16 H25.7 L15.85 26.8 Z" fill="#80b840"/><path d="M9 18 H22.7 L15.85 25 Z" fill="#a7d07a" opacity="0.6"/></svg>
<div class="t" style="left:643px;top:774.8px;font-size:25px;color:#1c1c1e;">Скачать файл</div>
<svg class="r" style="left:592px;top:833px" width="34" height="34" viewBox="0 0 34 34"><path d="M2.8 2 H21 L29 10 V31.5 H2.8 Z" fill="#edf1f6" stroke="#4d6072" stroke-width="2"/><path d="M20.5 2 V10.5 H29 Z" fill="#6aa6d2"/><rect x="2.8" y="28.3" width="26.2" height="4.4" fill="#8fbadb"/><rect x="12" y="3" width="7.5" height="12" fill="#74aa3c"/><path d="M8 15 H23.8 L15.85 25 Z" fill="#80b840"/><path d="M13 5 H18 M13 9 H18" stroke="#3b4a2d" stroke-width="1.6"/></svg>
<div class="t" style="left:643px;top:838.8px;font-size:25px;color:#1c1c1e;">Скачать архивом ZIP</div>
<svg class="r" style="left:592px;top:897px" width="34" height="34" viewBox="0 0 34 34"><path d="M1.8 6 Q1.8 3.3 4.5 3.3 H27.3 Q30 3.3 30 6 V28.5 Q30 31 27.5 31 H4.3 Q1.8 31 1.8 28.5 Z" fill="#8bb8da" stroke="#5aa0d6" stroke-width="1"/><path d="M1.8 6 Q1.8 3.3 4.5 3.3 H27.3 Q30 3.3 30 6 V10.2 H1.8 Z" fill="#4f85b8"/><path d="M13.5 5 L16 7 L13.5 9 L16 11 L13.5 13 L16 15 L13.5 17 L16 19 L13.5 21 L16 23 L13.5 25" fill="none" stroke="#2f3545" stroke-width="1.6"/></svg>
<div class="t" style="left:643px;top:902.8px;font-size:25px;color:#1c1c1e;">Создать Архив</div>
<svg class="r" style="left:592px;top:961px" width="34" height="34" viewBox="0 0 34 34"><path d="M10.6 1.6 H23 L29.5 8 V26 H10.6 Z" fill="#edf1f6" stroke="#4d84b3" stroke-width="2"/><path d="M1.8 7 H14.5 L21.3 13.5 V32.4 H1.8 Z" fill="#edf1f6" stroke="#4d84b3" stroke-width="2"/><path d="M14 7 V14 H21" fill="none" stroke="#4d84b3" stroke-width="1.6"/></svg>
<div class="t" style="left:643px;top:966.8px;font-size:25px;color:#1c1c1e;">Копировать</div>
<svg class="r" style="left:592px;top:1025px" width="34" height="34" viewBox="0 0 34 34"><defs><linearGradient id="mvf" x1="0" y1="0" x2="0" y2="1"><stop offset="0" stop-color="#c9ced6"/><stop offset="1" stop-color="#959ba5"/></linearGradient></defs><path d="M10.6 1 H22.5 L29.5 8 V26 H10.6 Z" fill="#edf1f6" stroke="#575d6a" stroke-width="2"/><path d="M22 1 V8.5 H29.5 Z" fill="#5a9fd0"/><path d="M0 16 Q0 13 3 13 H9 L11 15.5 H22.5 Q25.7 15.5 25.7 18.5 V30 Q25.7 32.5 23 32.5 H2.5 Q0 32.5 0 30 Z" fill="url(#mvf)"/></svg>
<div class="t" style="left:643px;top:1030.8px;font-size:25px;color:#1c1c1e;">Переместить</div>
<svg class="r" style="left:592px;top:1089px" width="34" height="34" viewBox="0 0 34 34"><path d="M1 5 H11.5 L18.8 12 V30.8 H1 Z" fill="#edf1f6" stroke="#4d84b3" stroke-width="2"/><path d="M18.8 5 H24.5 L31.4 12 V30.8 H18.8 Z" fill="#edf1f6" stroke="#4d84b3" stroke-width="2"/><path d="M11.5 5 V12 H18.8 M24.5 5 V12 H31.4" fill="none" stroke="#4d84b3" stroke-width="1.4"/></svg>
<div class="t" style="left:643px;top:1094.8px;font-size:25px;color:#1c1c1e;">Создать Копию</div>
<svg class="r" style="left:592px;top:1153px" width="34" height="34" viewBox="0 0 34 34"><path d="M3.1 2.1 H17 L26.9 12 V31.8 H3.1 Z" fill="#eef2f6" stroke="#4f5565" stroke-width="1.8"/><path d="M16 1.5 V12.4 H27.5 Z" fill="#5d9ed0"/><text x="15.2" y="22.8" font-family="Liberation Mono" font-size="10.5" font-weight="bold" text-anchor="middle" fill="#3f4452" letter-spacing="-0.3">755</text></svg>
<div class="t" style="left:643px;top:1158.8px;font-size:25px;color:#1c1c1e;">Изменить Атрибуты</div>
<svg class="r" style="left:592px;top:1217px" width="34" height="34" viewBox="0 0 34 34"><defs><linearGradient id="trb" x1="0" y1="0" x2="1" y2="0"><stop offset="0" stop-color="#d6d8da"/><stop offset="0.35" stop-color="#7e8388"/><stop offset="0.6" stop-color="#6b7075"/><stop offset="1" stop-color="#c9cccf"/></linearGradient></defs><path d="M5.9 6.5 H28 L27 29 Q27 30.5 25.5 30.5 H8.4 Q6.9 30.5 6.9 29 Z" fill="url(#trb)"/><rect x="3.9" y="3" width="26.1" height="4" rx="2" fill="#3a3d44"/><g stroke="#5c6066" stroke-width="1" opacity="0.6"><line x1="11" y1="8" x2="11" y2="29"/><line x1="15.5" y1="8" x2="15.5" y2="29"/><line x1="20" y1="8" x2="20" y2="29"/><line x1="24" y1="8" x2="24" y2="29"/></g></svg>
<div class="t" style="left:643px;top:1222.8px;font-size:25px;color:#1c1c1e;">Удалить</div>
</body></html>
